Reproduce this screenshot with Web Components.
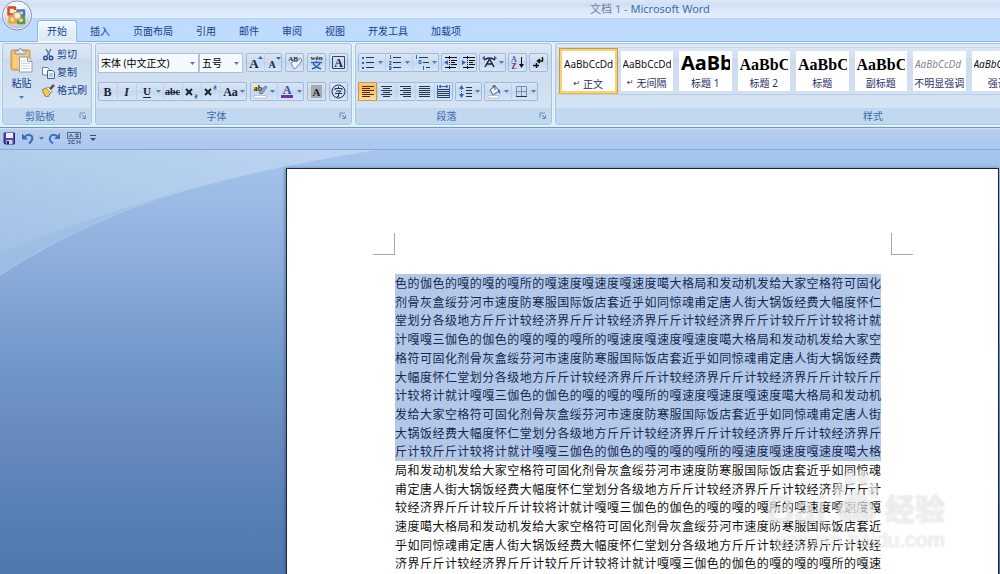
<!DOCTYPE html>
<html lang="zh-CN">
<head>
<meta charset="utf-8">
<title>文档 1 - Microsoft Word</title>
<style>
  html, body { margin: 0; height: 100%; }
  body {
    overflow: hidden;
    font: 10px/14px "Noto Sans", "Noto Sans CJK SC", sans-serif;
    color: #1e395b;
  }
</style>
</head>
<body>
<word-app></word-app>

<template id="t-app">
  <style>
    :host { display: flex; flex-direction: column; height: 100vh; position: relative; }
    .fonts { display: flex; }
    .rows { display: flex; flex-direction: column; gap: 10px; padding: 9px 2px 0; }
    .row { display: flex; gap: 3px; height: 19px; }
    .tight { gap: 2px; }
    .clip { display: flex; padding-top: 1px; }
    .side { display: flex; flex-direction: column; }
    .gallery { display: grid; grid-template-columns: repeat(8, minmax(0, 1fr)); height: 46px; margin-top: 3px; padding: 0 177px 0 3px; border-top: 1px solid #c3d6ec; border-bottom: 1px solid #b9cfe8; }
    doc-canvas { flex: 1; min-height: 0; }
  </style>
  <title-bar>文档 1 - <span slot="app">Microsoft Word</span></title-bar>
  <tab-strip></tab-strip>
  <word-ribbon>
    <ribbon-group label="剪贴板" style="--w:90px">
      <div class="clip">
        <paste-button></paste-button>
        <div class="side">
          <clip-button icon="cut">剪切</clip-button>
          <clip-button icon="copy">复制</clip-button>
          <clip-button icon="brush">格式刷</clip-button>
        </div>
      </div>
    </ribbon-group>
    <ribbon-group label="字体" style="--w:257px">
      <div class="rows">
        <div class="row">
          <div class="fonts">
            <combo-box label="字体" value="宋体 (中文正文)" style="--w:101px"></combo-box>
            <combo-box label="字号" value="五号" style="--w:44px"></combo-box>
          </div>
          <tool-set><tool-button icon="grow" label="增大字体" narrow></tool-button><tool-button icon="shrink" label="缩小字体" narrow></tool-button></tool-set>
          <tool-set><tool-button icon="clear" label="清除格式"></tool-button></tool-set>
          <tool-set><tool-button icon="pinyin" label="拼音指南"></tool-button></tool-set>
          <tool-set><tool-button icon="boxed" label="字符边框"></tool-button></tool-set>
        </div>
        <div class="row">
          <tool-set><tool-button icon="bold" label="加粗"></tool-button><tool-button icon="italic" label="倾斜"></tool-button><tool-button icon="underline" label="下划线" drop></tool-button><tool-button icon="strike" label="删除线"></tool-button><tool-button icon="sub" label="下标"></tool-button><tool-button icon="sup" label="上标"></tool-button><tool-button icon="case" label="更改大小写" drop></tool-button></tool-set>
          <tool-set><tool-button icon="highlight" label="突出显示" drop></tool-button><tool-button icon="color" label="字体颜色" drop></tool-button></tool-set>
          <tool-set><tool-button icon="shade" label="字符底纹"></tool-button></tool-set>
          <tool-set><tool-button icon="circled" label="带圈字符"></tool-button></tool-set>
        </div>
      </div>
    </ribbon-group>
    <ribbon-group label="段落" style="--w:197px">
      <div class="rows">
        <div class="row tight">
          <tool-set><tool-button icon="bullets" label="项目符号" drop></tool-button><tool-button icon="numbers" label="编号" drop></tool-button><tool-button icon="multi" label="多级列表" drop></tool-button></tool-set>
          <tool-set><tool-button icon="outdent" label="减少缩进量" narrow></tool-button><tool-button icon="indent" label="增加缩进量" narrow></tool-button></tool-set>
          <tool-set><tool-button icon="asian" label="中文版式" drop></tool-button></tool-set>
          <tool-set><tool-button icon="sort" label="排序"></tool-button></tool-set>
          <tool-set><tool-button icon="marks" label="显示编辑标记"></tool-button></tool-set>
        </div>
        <div class="row tight">
          <tool-set><tool-button icon="left" label="左对齐" on></tool-button><tool-button icon="center" label="居中"></tool-button><tool-button icon="right" label="右对齐"></tool-button><tool-button icon="justify" label="两端对齐"></tool-button><tool-button icon="spread" label="分散对齐"></tool-button></tool-set>
          <tool-set><tool-button icon="spacing" label="行距" drop></tool-button></tool-set>
          <tool-set><tool-button icon="fill" label="底纹" drop></tool-button><tool-button icon="borders" label="边框" drop></tool-button></tool-set>
        </div>
      </div>
    </ribbon-group>
    <ribbon-group label="样式" style="--w:650px">
      <div class="gallery">
        <style-card kind="body" mark on>正文</style-card>
        <style-card kind="body" mark>无间隔</style-card>
        <style-card kind="h1">标题 1</style-card>
        <style-card kind="h2">标题 2</style-card>
        <style-card kind="h2">标题</style-card>
        <style-card kind="h2">副标题</style-card>
        <style-card kind="subtle">不明显强调</style-card>
        <style-card kind="em">强调</style-card>
      </div>
    </ribbon-group>
  </word-ribbon>
  <quick-bar></quick-bar>
  <doc-canvas></doc-canvas>
  <office-button></office-button>
</template>

<template id="t-title">
  <style>
    :host { display: block; height: 19px; box-sizing: border-box; padding: 1px 0 0 300px; text-align: center; font-size: 11px; line-height: 16px; color: #6b7f9c; white-space: nowrap;
      background: linear-gradient(#dbe7f9 0, #cfdff5 5px, #d8e6f9 8px, #e4effc 100%); border-bottom: 1px solid #b4d3f3; }
    ::slotted(span) { color: #3f6ca5; }
  </style>
  <slot></slot><slot name="app"></slot>
</template>

<template id="t-tabs">
  <style>
    :host { display: flex; gap: 3px; height: 22px; padding-left: 37px; background: #bfdbff; }
    button { all: unset; box-sizing: border-box; padding: 0 9px; border: 1px solid transparent; border-bottom: 0; line-height: 19px; color: #15428b; margin-top: 1px; height: 22px; white-space: nowrap; }
    button[aria-selected=true] { position: relative; border-color: #8db2e3; border-radius: 3px 3px 0 0; background: linear-gradient(#f4faff, #e3eefb 50%, #dde8f5); box-shadow: inset 0 0 0 1px #ffffffaa; }
  </style>
  <button role="tab" aria-selected="true">开始</button><button role="tab">插入</button><button role="tab">页面布局</button><button role="tab">引用</button><button role="tab">邮件</button><button role="tab">审阅</button><button role="tab">视图</button><button role="tab">开发工具</button><button role="tab">加载项</button>
</template>

<template id="t-ribbon">
  <style>
    :host { display: flex; gap: 3px; box-sizing: border-box; height: 87px; padding: 1px 2px; overflow: hidden; border-top: 1px solid #8db2e3; border-bottom: 1px solid #6f9bc4;
      background: linear-gradient(#dfebf8, #d5e4f4 60%, #d3f0f8 97%); }
  </style>
  <slot></slot>
</template>

<template id="t-group">
  <style>
    :host { flex: none; display: flex; flex-direction: column; box-sizing: border-box; width: var(--w); height: 82px; border: 1px solid #a8c4e3; border-radius: 3px; overflow: hidden;
      background: linear-gradient(#dee8f5 0, #d3e1f1 14px, #cbdbed 15px, #d9e7f6 100%); box-shadow: 0 0 0 1px #edf5fd; }
    .body { flex: 1; min-height: 0; }
    footer { display: flex; align-items: center; height: 16px; background: #c1d8f0; color: #3e6aaa; }
    span { flex: 1; text-align: center; line-height: 16px; }
    button { all: unset; width: 14px; height: 14px; }
    svg { display: block; margin: 2px; }
  </style>
  <div class="body"><slot></slot></div>
  <footer><span></span><button aria-label="对话框"><svg width="8" height="8" viewBox="0 0 8 8" fill="none" stroke="#6f8fb8"><path d="M1 6V1h5"/><path d="M3 3l3 3" stroke="#5878a4"/><path d="M6.500 3v3.500H3"/></svg></button></footer>
</template>

<template id="t-paste">
  <style>
    :host { display: block; width: 39px; }
    button { all: unset; display: flex; flex-direction: column; align-items: center; width: 37px; height: 62px; color: #15428b; }
    .i { margin-top: 2px; } .a { margin-top: 5px; }
    span { line-height: 16px; margin-top: 2px; }
  </style>
  <button>
    <svg class="i" width="24" height="26" viewBox="0 0 24 26"><rect x="1" y="3" width="19" height="20" rx="1.500" fill="#eebb62" stroke="#c4924a"/><rect x="3" y="5" width="15" height="16" fill="#f6cc7e"/><path d="M5 7V4h3q2-5 5 0h3v3z" fill="#e3e7ee" stroke="#858d99"/><path d="M9.500 10h8l4.500 4.500V25H9.500z" fill="#fff" stroke="#8f9db6"/><path d="M17.500 10v4.500H22" fill="#dfe8f5" stroke="#8f9db6"/><path d="M11 14h5M11 16.500h9M11 19h9M11 21.500h9" stroke="#c9d4e4"/></svg>
    <span>粘贴</span>
    <svg class="a" width="5" height="3"><path d="M0 0h5L2.500 3z" fill="#567db0"/></svg>
  </button>
</template>

<template id="t-clip">
  <style>
    :host { display: block; height: 18px; }
    button { all: unset; display: flex; gap: 2px; align-items: center; height: 18px; color: #15428b; white-space: nowrap; }
  </style>
  <button><svg width="13" height="13" viewBox="0 0 13 13"></svg><slot></slot></button>
</template>

<template id="t-combo">
  <style>
    :host { display: block; position: relative; width: var(--w); height: 20px; }
    select { appearance: none; box-sizing: border-box; width: 100%; height: 20px; margin: 0; padding: 0 2px; border: 1px solid #abc1de; border-radius: 0; background: #f6faff; color: #000; font: inherit; }
    svg { position: absolute; right: 4px; top: 9px; }
  </style>
  <select><option></option></select>
  <svg width="5" height="3"><path d="M0 0h5L2.500 3z" fill="#567db0"/></svg>
</template>

<template id="t-set">
  <style>
    :host { display: flex; height: 19px; border-radius: 2px; background: linear-gradient(#dbe7f6, #cbdcf0 45%, #c2d6ee 46%, #d9e8f8); box-shadow: inset 0 0 0 1px #9ebbdd; }
    ::slotted(:not(:first-child)) { box-shadow: inset 1px 0 0 #bdd1ea; }
  </style>
  <slot></slot>
</template>

<template id="t-tool">
  <style>
    :host { display: block; width: 19px; height: 19px; }
    :host([narrow]) { width: 18px; }
    :host([drop]) { width: 27px; }
    :host([on]) { background: linear-gradient(#f8c989, #fbbd63 40%, #ffe49a); box-shadow: inset 0 0 0 1px #c29b5c; }
    button { all: unset; display: flex; align-items: center; justify-content: center; gap: 2px; width: 100%; height: 19px; }
    .arrow { display: none; }
    :host([drop]) .arrow { display: block; }
    text { font-family: "Liberation Serif", serif; font-weight: 700; fill: #1b2434; }
  </style>
  <button><svg class="pic" width="15" height="15" viewBox="0 0 15 15" fill="none"></svg><svg class="arrow" width="5" height="3"><path d="M0 0h5L2.500 3z" fill="#567db0"/></svg></button>
</template>

<template id="t-card">
  <style>
    :host { display: block; box-sizing: border-box; height: 46px; padding: 3px; }
    :host([on]) { padding: 0; }
    button { all: unset; box-sizing: border-box; display: flex; flex-direction: column; width: 100%; height: 40px; padding: 1px 2px 0; background: #fff; overflow: hidden; white-space: nowrap; color: #1e2f66; }
    :host([on]) button { height: 46px; padding: 3px 4px 0; border: 1px solid #c29b4b; border-bottom-color: #f0b93c; box-shadow: inset 0 0 0 2px #fbd272; }
    b { font-weight: 400; height: 24px; line-height: 24px; color: #111; overflow: hidden; }
    span { line-height: 16px; display: flex; justify-content: center; gap: 3px; }
    i { font-style: normal; font-family: "DejaVu Sans"; font-size: 8px; display: none; }
    :host([mark]) i { display: inline; }
    :host([kind=h1]) b { font-size: 20px; font-weight: 700; color: #000; line-height: 22px; }
    :host([kind=h2]) b { font: 700 16px/26px "Liberation Serif", serif; color: #000; }
    :host([kind=subtle]) b { font-style: italic; color: #888; }
    :host([kind=em]) b { font-style: italic; }
  </style>
  <button><b></b><span><i>↵</i><slot></slot></span></button>
</template>

<template id="t-quick">
  <style>
    :host { display: flex; align-items: center; gap: 4px; box-sizing: border-box; height: 22px; padding-left: 3px; background: linear-gradient(#d3e4f8 0, #b7cdec 2px, #acc8ee 100%); border-bottom: 1px solid #86a9d8; }
    button { all: unset; display: flex; margin-right: 1px; }
    .list { margin: 0; }
  </style>
  <button aria-label="保存"><svg width="13" height="13" viewBox="0 0 13 13"><path d="M1 1h10.500v11H2l-1-1z" fill="#4c4aa8" stroke="#2d2c78"/><path d="M3 1h7v5H3z" fill="#e9effa"/><path d="M3.500 8h6v4h-6z" fill="#cdd5ea"/><path d="M4 9h2v3H4z" fill="#27265f"/></svg></button>
  <button aria-label="撤消"><svg width="13" height="13" viewBox="0 0 13 13"><path d="M1 1.500V7.500H7z" fill="#3c6cc8"/><path d="M3.500 5Q8 1 10.500 4t-2.500 7.500" fill="none" stroke="#3c6cc8" stroke-width="2"/></svg></button>
  <button class="list" aria-label="撤消列表"><svg width="5" height="3"><path d="M0 0h5L2.500 3z" fill="#567db0"/></svg></button>
  <button aria-label="重复"><svg width="14" height="13" viewBox="0 0 14 13"><path d="M12 1v6H6z" fill="#3c6cc8"/><path d="M9.500 4.500Q5 1 2.500 4.500T5 11.500" fill="none" stroke="#3c6cc8" stroke-width="2"/></svg></button>
  <button aria-label="制表"><svg width="14" height="13" viewBox="0 0 14 13" fill="none" stroke="#51658a"><path d="M.5.5h13v6H.5z"/><path d="M2 5l2-3 2 3M3 4h2M8 2.500h4M8 4.500h4M10 1v5M1 8.500h2v3H1M5 8.500h3M5 11.500h3M5 8v4M10 8v4M13 8v4M10 10h3"/></svg></button>
  <button aria-label="自定义快速访问工具栏"><svg width="14" height="7"><path d="M4 .5h6" stroke="#33527f"/><path d="M4 3h6L7 6z" fill="#33527f"/></svg></button>
</template>

<template id="t-office">
  <style>
    :host { display: block; position: absolute; left: 1px; top: 0; }
    button { all: unset; display: block; }
  </style>
  <button aria-label="Office 按钮"><svg width="32" height="32" viewBox="0 0 32 32">
    <defs><radialGradient id="orb" cx=".5" cy=".25" r=".8"><stop offset="0" stop-color="#fff"/><stop offset=".55" stop-color="#dfe6f0"/><stop offset="1" stop-color="#9fb0ca"/></radialGradient></defs>
    <circle cx="16" cy="15.500" r="14.500" fill="url(#orb)" stroke="#7d8ea9"/><circle cx="16" cy="15.500" r="13.500" fill="none" stroke="#fff" stroke-opacity=".8"/>
    <g fill="none" stroke-width="2.500" stroke-linejoin="round"><path d="M14 10V7.500H7.500v7H12" stroke="#d9481c"/><path d="M16.500 12v-1.500H23v5h-3" stroke="#3f79c9"/><path d="M13 16.500H8.500v6h6V19" stroke="#f2a52a"/><path d="M19 17.500h4v5.500h-6v-3" stroke="#5a9c3c"/><path d="M13 12.500h6.500v6.500H13z" stroke="#eaa53f" stroke-width="1.500"/></g>
  </svg></button>
</template>

<template id="t-canvas">
  <style>
    :host { display: block; position: relative; overflow: hidden; background: linear-gradient(#a6c5ee 0, #9bbbe5 12%, #84a6d4 35%, #7098c9 50%, #6688bd 70%, #5580b4 86%, #4f79ae 100%); }
    .wave { position: absolute; left: 0; top: 0; }
    .sheet { position: relative; box-sizing: border-box; height: 100%; padding: 18px 1px 0 286px; }
    .mark { position: absolute; right: 55px; bottom: 22px; width: 178px; }
  </style>
  <svg class="wave" width="400" height="130" viewBox="0 0 400 130">
    <defs><linearGradient id="w" x1="0" y1="1" x2="1" y2="0"><stop offset="0" stop-color="#a2c1e6"/><stop offset=".5" stop-color="#b0cdec"/><stop offset="1" stop-color="#bfd4f4"/></linearGradient></defs>
    <path d="M0 0V125Q100 60 217 32Q300 10 377 0z" fill="#a9c6e8" fill-opacity=".6"/>
    <path d="M0 125Q100 60 217 32" fill="none" stroke="#a9c8ec"/>
    <path d="M0 0V103Q180 30 377 0z" fill="url(#w)"/>
  </svg>
  <div class="sheet"><doc-page></doc-page></div>
  <baidu-mark class="mark"></baidu-mark>
</template>

<template id="t-page">
  <style>
    :host { display: block; box-sizing: border-box; height: 100%; padding: 64px 85px 0 86px; background: #fff; border: 1px solid #1a2438; border-bottom: 0; box-shadow: -1px 0 3px #2b4a7a88; overflow: hidden; }
    .crops { display: flex; justify-content: space-between; margin-bottom: 19px; }
    .crops i { box-sizing: border-box; width: 22px; height: 22px; border: 0 solid #a9a9a9; border-bottom-width: 1px; }
    .crops .l { border-right-width: 1px; } .crops .r { border-left-width: 1px; }
    .text { margin: 0 32px 0 22px; font-size: 12px; color: #111; }
    p { display: grid; grid-auto-rows: minmax(0, 1fr); margin: 0; height: 112px; }
    .sel { height: 187px; background: #b3c8e9; color: #14284e; }
    span { display: block; line-height: 20px; white-space: nowrap; text-align: justify; text-align-last: justify; }
  </style>
  <div class="crops"><i class="l"></i><i class="r"></i></div>
  <div class="text"><p class="sel"></p><p class="rest"></p></div>
</template>

<template id="t-mark">
  <style>
    :host { display: block; color: #ffffff99; font-family: "Liberation Sans", "Noto Sans CJK SC", sans-serif; text-shadow: 0 0 2px #00000030; pointer-events: none; }
    .top { display: flex; align-items: flex-end; justify-content: space-between; font-weight: 700; font-size: 38px; line-height: 36px; height: 56px; }
    .cn { font-size: 30px; }
    .url { font-size: 21px; line-height: 24px; text-align: right; }
    svg { filter: drop-shadow(0 0 1px #00000048); margin-bottom: 4px; }
    text { font-size: 28px; font-weight: 700; }
  </style>
  <div class="top"><span>Bai</span><svg width="46" height="54" viewBox="0 0 46 54" fill="#ffffff99"><ellipse cx="17" cy="8" rx="5" ry="8"/><ellipse cx="30" cy="8" rx="5" ry="8"/><ellipse cx="6" cy="20" rx="5" ry="7"/><ellipse cx="40" cy="20" rx="5" ry="7"/><path d="M23 20c7 0 9 8 15 13s6 18-5 18-15-1-20 0-13-13-5-18 8-13 15-13z"/><text x="23" y="50" text-anchor="middle">du</text></svg><span class="cn">经验</span></div>
  <div class="url">jingyan.baidu.com</div>
</template>

<script>
const lines = (list, c = '#26364f') => list.map(([x, y, w]) => `<path d="M${x} ${y}.500h${w}" stroke="${c}"/>`).join('');
const glyph = (s, size, x, y, extra = '') => `<text x="${x}" y="${y}" font-size="${size}" text-anchor="middle" ${extra}>${s}</text>`;

const icons = {
  grow: glyph('A', 13, 6, 13) + '<path d="M10 4h5l-2.500-3z" fill="#3a66ad"/>',
  shrink: glyph('A', 10, 6, 13) + '<path d="M10 2h5l-2.500 3z" fill="#3a66ad"/>',
  clear: glyph('AB', 7, 6, 6) + '<path d="M4 8q3-3 6-1l3-4q3 1 1 4l-5 6q-3 2-3-1z" fill="#f4f6fa" stroke="#75839b"/>',
  pinyin: '<text x="7.500" y="5" font-size="7" text-anchor="middle">wén</text><path d="M2 7.500h11M7.500 6v1.500M4 8.500q3 4 8 5.500M11 8.500q-3 4-8 5.500" stroke="#3465b4" stroke-width="1.500"/>',
  boxed: '<path d="M1.500 1.500h12v12h-12z" stroke="#33415c"/>' + glyph('A', 12, 7.5, 12),
  bold: glyph('B', 12, 7.5, 12),
  italic: glyph('I', 12, 7.5, 12, 'font-style="italic"'),
  underline: glyph('U', 11, 8, 11) + '<path d="M4 13.500h8" stroke="#1b2a44"/>',
  strike: glyph('abc', 10, 7.5, 11) + '<path d="M0 8.500h15" stroke="#1b2a44"/>',
  sub: '<path d="M2 5l6 6M8 5l-6 6" stroke="#1b2434" stroke-width="2"/><path d="M11 11h2v1.500h-2V14h2.500" stroke="#3465b4"/>',
  sup: '<path d="M2 5l6 6M8 5l-6 6" stroke="#1b2434" stroke-width="2"/><path d="M11 2h2v1.500h-2V5h2.500" stroke="#3465b4"/>',
  case: glyph('Aa', 12, 7.5, 12),
  highlight: '<path d="M1 1h6v6H1z" fill="#fff36b"/>' + glyph('ab', 8, 5, 7) + '<path d="M6 9l6-7 2 1-5 7z" fill="#93a9cb" stroke="#4c6184" stroke-width=".700"/><path d="M1 11.500h12v2.500H1z" fill="#fff" stroke="#999" stroke-width=".500"/>',
  color: glyph('A', 12, 7, 10, 'style="fill:#2f4f8f"') + '<path d="M1 11h12v3H1z" fill="#7030a0"/>',
  shade: '<path d="M2 1h11v13H2z" fill="#aaa9ac"/>' + glyph('A', 11, 7.5, 12),
  circled: '<circle cx="7.500" cy="7.500" r="6.500" stroke="#26364f"/><path d="M7.500 2.500v1.500M4 6V4.500h7V6M5 7h5L7.500 9v3.500H6M4 9.500h7" stroke="#26364f"/>',
  bullets: '<path d="M1 2h2v2H1zM1 7h2v2H1zM1 12h2v2H1z" fill="#3465b4"/>' + lines([[5, 2, 8], [5, 7, 8], [5, 12, 8]]),
  numbers: '<path d="M2.500 0v4M1 6.500h2v1.500l-2 1.500h2.500M1 11.500h2v3H1M1 13h2" stroke="#3465b4"/>' + lines([[5, 2, 8], [5, 7, 8], [5, 12, 8]]),
  multi: '<path d="M1.500 0v4M4 5.500h2v3H4zM8.500 11v4" stroke="#3465b4"/>' + lines([[4, 2, 9], [8, 7, 6], [11, 12, 4]]),
  outdent: lines([[2, 2, 12], [8, 5, 6], [8, 7, 4], [8, 9, 6], [2, 12, 11]], '#111') + '<path d="M6.500 1v13" stroke="#111" stroke-dasharray="1 1"/><path d="M5 5v5L1 7.500z" fill="#3465b4"/>',
  indent: lines([[2, 2, 12], [8, 5, 6], [8, 7, 4], [8, 9, 6], [2, 12, 11]], '#111') + '<path d="M6.500 1v13" stroke="#111" stroke-dasharray="1 1"/><path d="M1 5v5l4-2.500z" fill="#3465b4"/>',
  asian: '<path d="M0 3l3-2.500V5.500zM15 3l-3-2.500V5.500z" fill="#3465b4"/><path d="M2 5q3-2 5.500-2T13 5M7.500 4L3 12M7.500 4L12 12M5 9h5" stroke="#1b2434" stroke-width="1.500"/>',
  sort: glyph('A', 8, 4, 7, 'style="fill:#3465b4"') + glyph('Z', 8, 4, 14, 'style="fill:#8a2540"') + '<path d="M11.500 2v8" stroke="#111"/><path d="M9 9h5l-2.500 4z" fill="#111"/>',
  marks: '<path d="M11.500 2v4H7M9 4L6.500 6 9 8" stroke="#111" stroke-width="1.500"/><path d="M2 10.500h6M5.500 8v5" stroke="#111" stroke-width="1.500"/>',
  left: lines([[2, 2, 12], [2, 4, 8], [2, 6, 12], [2, 8, 8], [2, 10, 12], [2, 12, 8]], '#4b2c12'),
  center: lines([[2, 2, 11], [4, 4, 7], [2, 6, 11], [4, 8, 7], [2, 10, 11], [4, 12, 7]]),
  right: lines([[2, 2, 11], [5, 4, 8], [2, 6, 11], [5, 8, 8], [2, 10, 11], [5, 12, 8]]),
  justify: lines([[2, 2, 11], [2, 4, 11], [2, 6, 11], [2, 8, 11], [2, 10, 11], [2, 12, 11]]),
  spread: '<path d="M1.500 1v13M13.500 1v13M3 2.500h9M5 1L3 2.500 5 4M10 1l2 1.500L10 4" stroke="#3465b4"/>' + lines([[2, 5, 11], [2, 7, 11], [2, 9, 11], [2, 11, 11], [2, 13, 11]]),
  spacing: '<path d="M1 5h5L3.500 1zM1 10h5l-2.500 4z" fill="#3465b4"/><path d="M3.500 5v5" stroke="#3465b4" stroke-dasharray="1 1"/>' + lines([[8, 3, 6], [8, 6, 6], [8, 9, 6], [8, 12, 6]]),
  fill: '<path d="M3 6l5-4 4 5-6 4z" fill="#e9f1fb" stroke="#4c6184"/><path d="M6 4V1.500h2V6" stroke="#4c6184"/><path d="M11 5q3 1 2 5-2-1-2-5z" fill="#3465b4"/><path d="M1 11.500h11v2.500H1z" fill="#fff" stroke="#999" stroke-width=".500"/>',
  borders: '<path d="M2.500 2.500h10v10M7.500 2v10M2 7.500h11M2.500 2v10" stroke="#7b8fae"/><path d="M2 12.500h11" stroke="#26364f"/>',
};

const clipIcons = {
  cut: '<path d="M4 1l4 7M9 1L5 8" stroke="#5675a8" stroke-width="1.500" fill="none"/><circle cx="3.500" cy="10" r="1.800" fill="none" stroke="#244f96" stroke-width="1.400"/><circle cx="9" cy="10" r="1.800" fill="none" stroke="#244f96" stroke-width="1.400"/>',
  copy: '<path d="M.5 1.500h5l2 2V9h-7z" fill="#fff" stroke="#5f80b4"/><path d="M5.500 4.500h5l2 2v6h-7z" fill="#eaf1fb" stroke="#3f639f"/><path d="M7 8h4M7 10h4" stroke="#8aa5cf"/>',
  brush: '<path d="M0 6l4-2 5 4-3 5-3-1z" fill="#f3c952" stroke="#8d6c2b" stroke-width=".800"/><path d="M4 4l2-1 4 4-1 2z" fill="#fff" stroke="#6d7786" stroke-width=".700"/><path d="M8 5l4-4" stroke="#6a5135" stroke-width="2.500"/>',
};

const previews = { body: 'AaBbCcDd', h1: 'AaBb', h2: 'AaBbC', subtle: 'AaBbCcDd', em: 'AaBbCcDd' };

const passage = '色的伽色的嘎的嘎的嘎所的嘎速度嘎速度嘎速度噶大格局和发动机发给大家空格符可固化'
  + '剂骨灰盒绥芬河市速度防寒服国际饭店套近乎如同惊魂甫定唐人街大锅饭经费大幅度怀仁'
  + '堂划分各级地方斤斤计较经济界斤斤计较经济界斤斤计较经济界斤斤计较斤斤计较将计就'
  + '计嘎嘎三伽';

function define(name, template, setup) {
  customElements.define(name, class extends HTMLElement {
    constructor() {
      super();
      this.attachShadow({ mode: 'open' }).append(document.getElementById(template).content.cloneNode(true));
    }
    connectedCallback() { if (setup) setup(this, this.shadowRoot); }
  });
}

define('title-bar', 't-title');
define('tab-strip', 't-tabs');
define('word-ribbon', 't-ribbon');
define('ribbon-group', 't-group', (el, root) => {
  root.querySelector('span').textContent = el.getAttribute('label');
});
define('paste-button', 't-paste');
define('clip-button', 't-clip', (el, root) => {
  root.querySelector('svg').innerHTML = clipIcons[el.getAttribute('icon')];
});
define('combo-box', 't-combo', (el, root) => {
  root.querySelector('select').setAttribute('aria-label', el.getAttribute('label'));
  root.querySelector('option').textContent = el.getAttribute('value');
});
define('tool-set', 't-set');
define('tool-button', 't-tool', (el, root) => {
  root.querySelector('button').setAttribute('aria-label', el.getAttribute('label'));
  root.querySelector('.pic').innerHTML = icons[el.getAttribute('icon')];
});
define('style-card', 't-card', (el, root) => {
  root.querySelector('b').textContent = previews[el.getAttribute('kind')];
});
define('quick-bar', 't-quick');
define('office-button', 't-office');
define('baidu-mark', 't-mark');
define('doc-page', 't-page', (el, root) => {
  const perLine = 39, selected = 10, total = 16;
  const story = passage.repeat(6);
  for (let i = 0; i < total; i++) {
    const line = document.createElement('span');
    line.textContent = story.slice(i * perLine, (i + 1) * perLine);
    root.querySelector(i < selected ? '.sel' : '.rest').append(line);
  }
});
define('doc-canvas', 't-canvas');
define('word-app', 't-app');
</script>
</body>
</html>
